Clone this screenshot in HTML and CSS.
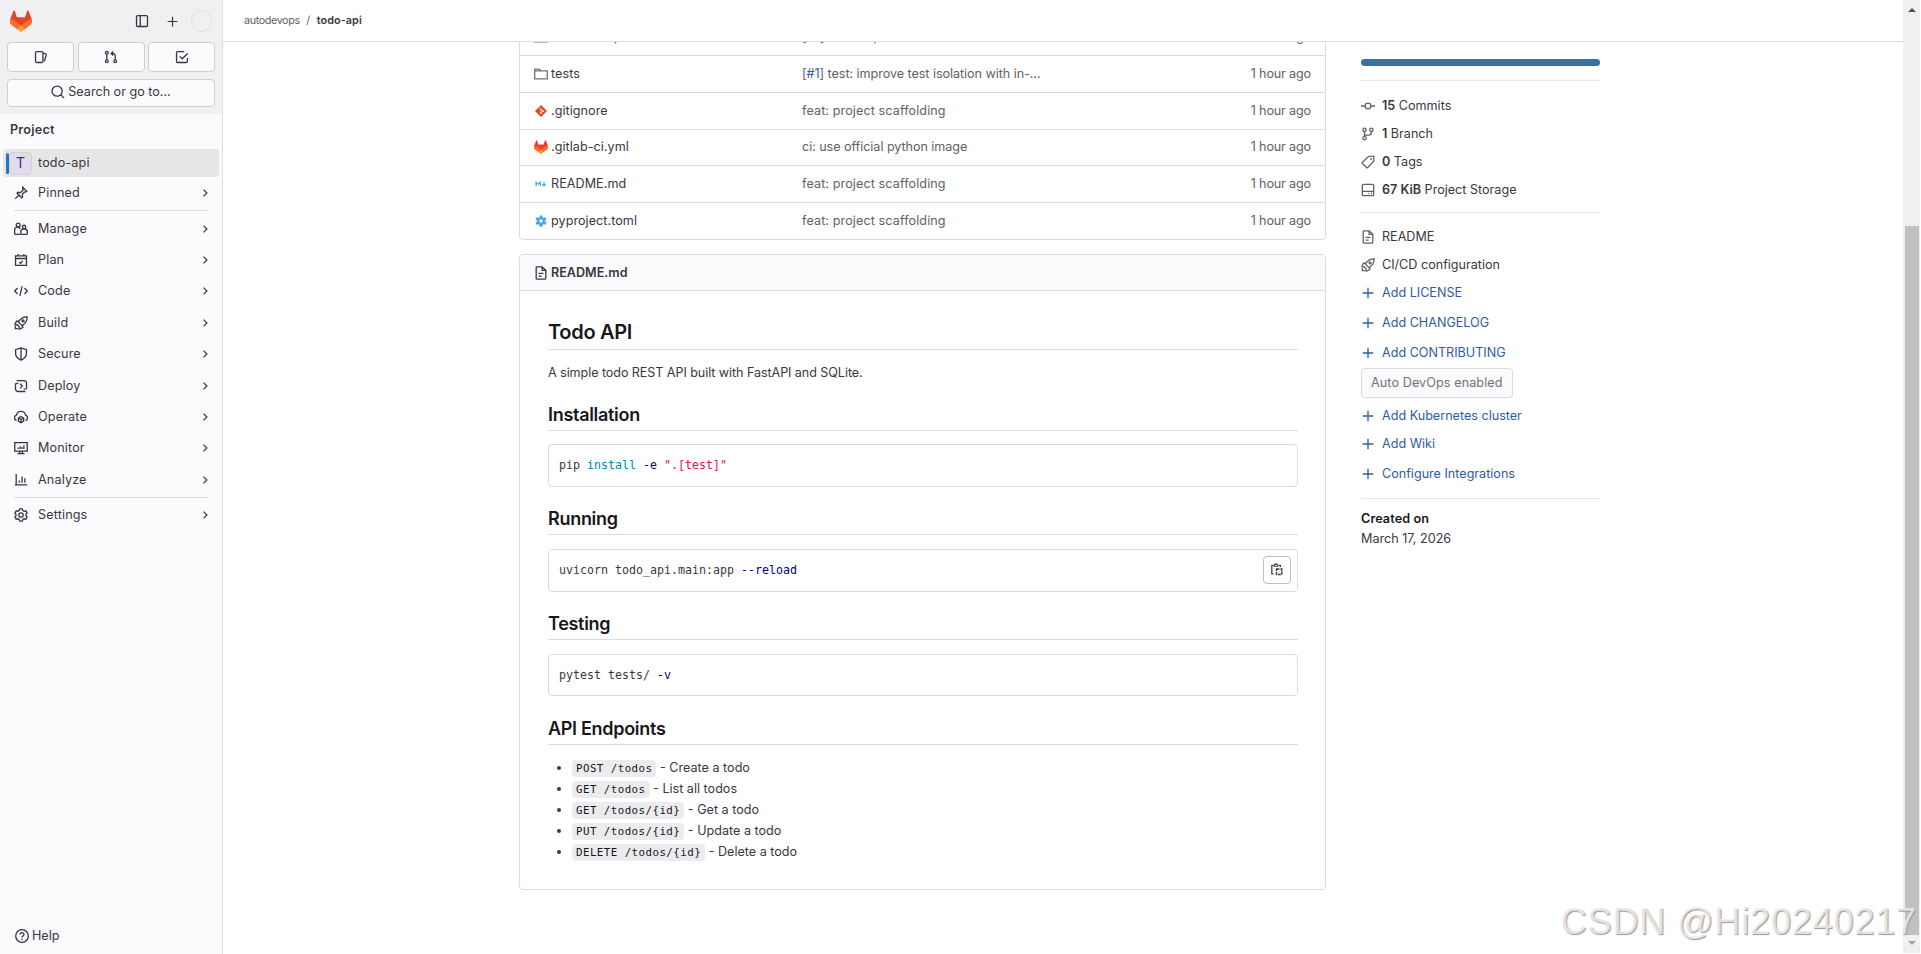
FILE: index.html
```html
<!DOCTYPE html>
<html lang="en">
<head>
    <meta charset="UTF-8" />
    <meta name="viewport" content="width=device-width, initial-scale=1.0"/>
    <title>autodevops / todo-api</title>
    <link rel="stylesheet" href="styles.css">
</head>
<body>
    <svg class="sprite" xmlns="http://www.w3.org/2000/svg">
        <symbol id="tanuki" viewBox="0 0 25 24">
            <path fill="#e24329" d="m24.507 9.5-.034-.09L21.082.562a.896.896 0 0 0-1.694.091l-2.29 7.01H7.825L5.535.653a.898.898 0 0 0-1.694-.09L.451 9.411.416 9.5a6.297 6.297 0 0 0 2.09 7.278l.012.01.03.022 5.16 3.867 2.56 1.935 1.554 1.176a1.051 1.051 0 0 0 1.268 0l1.555-1.176 2.56-1.935 5.197-3.89.014-.01A6.297 6.297 0 0 0 24.507 9.5Z"/>
            <path fill="#fc6d26" d="m24.507 9.5-.034-.09a11.44 11.44 0 0 0-4.56 2.051l-7.447 5.632 4.742 3.584 5.197-3.89.014-.01A6.297 6.297 0 0 0 24.507 9.5Z"/>
            <path fill="#fca326" d="m7.707 20.677 2.56 1.935 1.555 1.176a1.051 1.051 0 0 0 1.268 0l1.555-1.176 2.56-1.935-4.743-3.584-4.755 3.584Z"/>
            <path fill="#fc6d26" d="M5.01 11.461a11.43 11.43 0 0 0-4.56-2.05L.416 9.5a6.297 6.297 0 0 0 2.09 7.278l.012.01.03.022 5.16 3.867 4.745-3.584-7.444-5.632Z"/>
        </symbol>
        <symbol id="panel" viewBox="0 0 16 16"><rect x="1.75" y="1.75" width="12.5" height="12.5" rx="1.2"/><path d="M6 2v12" /></symbol>
        <symbol id="plus" viewBox="0 0 16 16"><path d="M8 2v12M2 8h12"/></symbol>
        <symbol id="issues" viewBox="0 0 16 16"><rect x="1.75" y="1.75" width="8.5" height="12.5" rx="1.5"/><path d="M10.5 3.5l2.9.9a1 1 0 0 1 .7 1.2l-2.3 7.2"/></symbol>
        <symbol id="merge" viewBox="0 0 16 16"><circle cx="3.2" cy="3.2" r="1.6"/><circle cx="3.2" cy="12.8" r="1.6"/><circle cx="12.8" cy="12.8" r="1.6"/><path d="M3.2 5v6M12.8 11V6.5a2.5 2.5 0 0 0-2.5-2.5H8.5M10.5 1.7L8.2 4l2.3 2.3"/></symbol>
        <symbol id="todo" viewBox="0 0 16 16"><path d="M10.5 1.75H3.2c-.8 0-1.45.65-1.45 1.45v9.6c0 .8.65 1.45 1.45 1.45h9.6c.8 0 1.45-.65 1.45-1.45V9M5.5 7.3L8.2 10l6.3-6"/></symbol>
        <symbol id="search" viewBox="0 0 16 16"><circle cx="7" cy="7" r="5.8"/><path d="M11.2 11.2L15 15"/></symbol>
        <symbol id="pin" viewBox="0 0 16 16"><path d="M10 1.5l4.5 4.5-1.5.9-.8-.2-2.7 2.7.3 3.1-1 1-5.3-5.3 1-1 3.1.3 2.7-2.7-.3-1zM6 10l-4.7 4.7"/></symbol>
        <symbol id="users" viewBox="0 0 16 16"><circle cx="4.8" cy="3.4" r="2.2"/><circle cx="11.5" cy="5.6" r="1.9"/><path d="M7 14.2H1.8c-.6 0-1-.4-1-1V9.500a3.200 3.200 0 0 1 6.200-1.500M8.800 14.2h5.400c.6 0 1-.4 1-1V11a3 3 0 0 0-3-3h-1.400a3 3 0 0 0-3 3v2.200c0 .6.4 1 1 1z"/></symbol>
        <symbol id="calendar" viewBox="0 0 16 16"><path d="M1.750 3.200h12.500v11H1.750zM1.750 6.300h12.500M4.700 1v2.500M11.300 1v2.500M6 10.500l1.500 1.300 2.500-2.800"/></symbol>
        <symbol id="code" viewBox="0 0 16 16"><path d="M4 4.500L.8 8 4 11.500M12 4.500L15.200 8 12 11.500M9.300 2.500l-2.600 11"/></symbol>
        <symbol id="rocket" viewBox="0 0 16 16"><path d="M15 1c-4.500-.2-7.500 1.700-10 5.700L9.300 11C13.300 8.500 15.200 5.500 15 1zM5.500 6H2.800L.9 10l3 .3M10 10.500v2.700l-4 1.900-.3-3M3.600 9.800l2.600 2.600M1.500 11.500v3h3"/><circle cx="10.400" cy="5.600" r="1.100"/></symbol>
        <symbol id="shield" viewBox="0 0 16 16"><path d="M8 1L1.800 3v4.500c0 3.500 2.700 5.900 6.200 7.500 3.500-1.600 6.200-4 6.200-7.500V3zM8 1v14"/></symbol>
        <symbol id="deploy" viewBox="0 0 16 16"><path d="M3 1.750h8.300a3 3 0 0 1 3 3v6.500M13 14.250H4.700a3 3 0 0 1-3-3v-6M11 11.500l3.300-.2M5 5l-3.300.2M7 5.500L9.500 8 7 10.500"/></symbol>
        <symbol id="cloud" viewBox="0 0 16 16"><path d="M2.800 12A3.200 3.200 0 0 1 2.800 5.900a5.300 5.300 0 0 1 10.400 0A3.200 3.200 0 0 1 13.200 12"/><path d="M8 7.500l3 1.700v3.600l-3 1.700-3-1.700V9.200zM5 9.300l3 1.600 3-1.600M8 11v3.300"/></symbol>
        <symbol id="monitor" viewBox="0 0 16 16"><path d="M.9 1.900h14.200v9.700H.9zM4 14.400h8M6.500 11.600v2.600M9.500 11.600v2.600M4.800 7.500v1.700M7 6v3.200M9.100 6.800v2.400M11.300 4.800v4.400"/></symbol>
        <symbol id="chart" viewBox="0 0 16 16"><path d="M2.500 1v13.200M1 13.500h14.200M6 8.500V11M9.200 4v7M12.400 6v5"/></symbol>
        <symbol id="gear" viewBox="0 0 16 16"><path d="M6.500 1h3l.6 1.900 1.400.8 2-.5 1.500 2.600L13.700 7.200v1.600l1.300 1.400-1.500 2.600-2-.5-1.400.8L9.500 15h-3l-.6-1.900-1.400-.8-2 .5L1 10.200l1.300-1.400V7.200L1 5.800l1.500-2.600 2 .5 1.400-.8z"/><circle cx="8" cy="8" r="2.500"/></symbol>
        <symbol id="help" viewBox="0 0 16 16"><circle cx="8" cy="8" r="7.200"/><path d="M5.800 6.300a2.200 2.200 0 1 1 3.300 1.900C8.400 8.600 8 9 8 9.700M8 11v1.500"/></symbol>
        <symbol id="chevron" viewBox="0 0 16 16"><path d="M6 3.500L10.500 8 6 12.500"/></symbol>
        <symbol id="folder" viewBox="0 0 16 16"><path d="M.8 13.500v-11h5.400l1.500 2h7.500v9zM.8 4.500h7"/></symbol>
        <symbol id="git" viewBox="0 0 16 16"><path fill="#e64a19" stroke="none" d="M8 0l8 8-8 8-8-8z"/><path stroke="#fff" stroke-width="1.200" d="M5.500 3l2.500 2.500v5M8 5.500l2.500 2.500"/><circle fill="#fff" stroke="none" cx="8" cy="10.800" r="1.200"/><circle fill="#fff" stroke="none" cx="10.800" cy="8.200" r="1.200"/></symbol>
        <symbol id="markdown" viewBox="0 0 16 16"><path stroke="#42a5f5" stroke-width="1.600" d="M1.500 11V5.600L4.300 8.600 7.100 5.600V11M12 5v5M9.700 8.200l2.300 2.300 2.300-2.300"/></symbol>
        <symbol id="toml" viewBox="0 0 16 16"><circle cx="8" cy="8" r="3.900" stroke="#42a5f5" stroke-width="3.200"/><path stroke="#42a5f5" stroke-width="3.600" d="M8 .5v3M8 12.500v3M1.500 4.300l2.600 1.500M11.900 10.200l2.600 1.500M1.500 11.700l2.600-1.500M11.900 5.800l2.600-1.500"/></symbol>
        <symbol id="doc" viewBox="0 0 16 16"><path d="M9.300.9H3.500a1 1 0 0 0-1 1v12.200a1 1 0 0 0 1 1h9a1 1 0 0 0 1-1V5zM9.300.9V5h4.200M5.200 8.500h5.600M5.200 11.500h3.600"/></symbol>
        <symbol id="copy" viewBox="0 0 16 16"><path d="M4.500 2.750H2.250v10.500h2M11 2.750h1.750V5"/><path d="M5.300 4V2.500L7.500.9l2.200 1.600V4z"/><path stroke-width="1.800" stroke-dasharray="3.600 1.200" d="M8 7.500h6.500v6.700H8z"/></symbol>
        <symbol id="commit" viewBox="0 0 16 16"><circle cx="8" cy="8" r="3.200"/><path d="M0 8h4.800M11.200 8H16"/></symbol>
        <symbol id="branch" viewBox="0 0 16 16"><circle cx="4" cy="3.200" r="1.900"/><circle cx="4" cy="12.800" r="1.900"/><circle cx="11.800" cy="3.200" r="1.900"/><path d="M4 5.200v5.600M4 9.200h4.800a3 3 0 0 0 3-3v-1"/></symbol>
        <symbol id="tag" viewBox="0 0 16 16"><path d="M8.800 1.500l5.100-.3a.8.800 0 0 1 .9.900l-.3 5.100-6.800 7a1 1 0 0 1-1.400 0L1.700 9.700a1 1 0 0 1 0-1.400z"/><circle cx="11.500" cy="4.500" r=".4"/></symbol>
        <symbol id="disk" viewBox="0 0 16 16"><rect x="1.500" y="1.500" width="13" height="13" rx="1.500"/><path d="M1.500 9.500h13M8.500 12h1M11.500 12h1"/></symbol>
    </svg>

    <aside class="sidebar">
        <div class="sidebar-top">
            <div class="brand-row">
                <svg class="logo"><use href="#tanuki"/></svg>
                <svg class="icon"><use href="#panel"/></svg>
                <svg class="icon plus"><use href="#plus"/></svg>
                <span class="avatar"></span>
            </div>
            <div class="shortcut-row">
                <a href="#"><svg class="icon"><use href="#issues"/></svg></a>
                <a href="#"><svg class="icon"><use href="#merge"/></svg></a>
                <a href="#"><svg class="icon"><use href="#todo"/></svg></a>
            </div>
            <button class="search"><svg class="icon"><use href="#search"/></svg>Search or go to…</button>
        </div>
        <div class="context-title">Project</div>
        <nav>
            <a class="nav-item active" href="#"><span class="project-avatar">T</span>todo-api</a>
            <a class="nav-item pinned" href="#"><svg class="icon"><use href="#pin"/></svg>Pinned<svg class="chevron"><use href="#chevron"/></svg></a>
            <hr>
            <a class="nav-item" href="#"><svg class="icon"><use href="#users"/></svg>Manage<svg class="chevron"><use href="#chevron"/></svg></a>
            <a class="nav-item" href="#"><svg class="icon"><use href="#calendar"/></svg>Plan<svg class="chevron"><use href="#chevron"/></svg></a>
            <a class="nav-item" href="#"><svg class="icon"><use href="#code"/></svg>Code<svg class="chevron"><use href="#chevron"/></svg></a>
            <a class="nav-item" href="#"><svg class="icon"><use href="#rocket"/></svg>Build<svg class="chevron"><use href="#chevron"/></svg></a>
            <a class="nav-item" href="#"><svg class="icon"><use href="#shield"/></svg>Secure<svg class="chevron"><use href="#chevron"/></svg></a>
            <a class="nav-item" href="#"><svg class="icon"><use href="#deploy"/></svg>Deploy<svg class="chevron"><use href="#chevron"/></svg></a>
            <a class="nav-item" href="#"><svg class="icon"><use href="#cloud"/></svg>Operate<svg class="chevron"><use href="#chevron"/></svg></a>
            <a class="nav-item" href="#"><svg class="icon"><use href="#monitor"/></svg>Monitor<svg class="chevron"><use href="#chevron"/></svg></a>
            <a class="nav-item" href="#"><svg class="icon"><use href="#chart"/></svg>Analyze<svg class="chevron"><use href="#chevron"/></svg></a>
            <hr>
            <a class="nav-item" href="#"><svg class="icon"><use href="#gear"/></svg>Settings<svg class="chevron"><use href="#chevron"/></svg></a>
        </nav>
        <a class="help" href="#"><svg class="icon"><use href="#help"/></svg>Help</a>
    </aside>

    <div class="page">
        <header class="topbar">
            <a href="#">autodevops</a><span class="slash">/</span><strong>todo-api</strong>
        </header>
        <div class="viewport">
            <main>
                <div class="file-table">
                    <div class="file-row">
                        <span class="file"><svg class="icon folder"><use href="#folder"/></svg>src/todo_api</span>
                        <span class="commit">[<a href="#">#1</a>] feat: implement</span>
                        <span class="ago">1 hour ago</span>
                    </div>
                    <div class="file-row">
                        <span class="file"><svg class="icon folder"><use href="#folder"/></svg>tests</span>
                        <span class="commit tight">[<a href="#">#1</a>] test: improve test isolation with in-…</span>
                        <span class="ago">1 hour ago</span>
                    </div>
                    <div class="file-row">
                        <span class="file"><svg class="icon small"><use href="#git"/></svg>.gitignore</span>
                        <span class="commit">feat: project scaffolding</span>
                        <span class="ago">1 hour ago</span>
                    </div>
                    <div class="file-row">
                        <span class="file"><svg class="icon"><use href="#tanuki"/></svg>.gitlab-ci.yml</span>
                        <span class="commit tight">ci: use official python image</span>
                        <span class="ago">1 hour ago</span>
                    </div>
                    <div class="file-row">
                        <span class="file"><svg class="icon small"><use href="#markdown"/></svg>README.md</span>
                        <span class="commit">feat: project scaffolding</span>
                        <span class="ago">1 hour ago</span>
                    </div>
                    <div class="file-row">
                        <span class="file"><svg class="icon small"><use href="#toml"/></svg>pyproject.toml</span>
                        <span class="commit">feat: project scaffolding</span>
                        <span class="ago">1 hour ago</span>
                    </div>
                </div>

                <article class="readme">
                    <div class="readme-title"><svg class="icon"><use href="#doc"/></svg>README.md</div>
                    <div class="markdown">
                        <h1>Todo API</h1>
                        <p>A simple todo REST API built with FastAPI and SQLite.</p>
                        <h2>Installation</h2>
                        <pre>pip <span class="nb">install</span> <span class="nt">-e</span> <span class="s2">".[test]"</span></pre>
                        <h2>Running</h2>
                        <pre>uvicorn todo_api.main:app <span class="nt">--reload</span><button class="copy"><svg class="icon"><use href="#copy"/></svg></button></pre>
                        <h2>Testing</h2>
                        <pre>pytest tests/ <span class="nt">-v</span></pre>
                        <h2>API Endpoints</h2>
                        <ul>
                            <li><code>POST /todos</code> - Create a todo</li>
                            <li><code>GET /todos</code> - List all todos</li>
                            <li><code>GET /todos/{id}</code> - Get a todo</li>
                            <li><code>PUT /todos/{id}</code> - Update a todo</li>
                            <li><code>DELETE /todos/{id}</code> - Delete a todo</li>
                        </ul>
                    </div>
                </article>
            </main>

            <aside class="info">
                <div class="language-bar"></div>
                <div class="info-group stats">
                    <a href="#"><svg class="icon"><use href="#commit"/></svg><span><b>15</b> Commits</span></a>
                    <a href="#"><svg class="icon"><use href="#branch"/></svg><span><b>1</b> Branch</span></a>
                    <a href="#"><svg class="icon"><use href="#tag"/></svg><span><b>0</b> Tags</span></a>
                    <a href="#"><svg class="icon"><use href="#disk"/></svg><span><b>67 KiB</b> Project Storage</span></a>
                </div>
                <div class="info-group links">
                    <a href="#"><svg class="icon"><use href="#doc"/></svg>README</a>
                    <a href="#"><svg class="icon"><use href="#rocket"/></svg>CI/CD configuration</a>
                    <a class="add" href="#"><svg class="icon"><use href="#plus"/></svg>Add LICENSE</a>
                    <a class="add spaced" href="#"><svg class="icon"><use href="#plus"/></svg>Add CHANGELOG</a>
                    <a class="add" href="#"><svg class="icon"><use href="#plus"/></svg>Add CONTRIBUTING</a>
                    <button class="devops">Auto DevOps enabled</button>
                    <a class="add" href="#"><svg class="icon"><use href="#plus"/></svg>Add Kubernetes cluster</a>
                    <a class="add" href="#"><svg class="icon"><use href="#plus"/></svg>Add Wiki</a>
                    <a class="add spaced" href="#"><svg class="icon"><use href="#plus"/></svg>Configure Integrations</a>
                </div>
                <div class="info-group created">
                    <b>Created on</b>
                    <span>March 17, 2026</span>
                </div>
            </aside>
        </div>
    </div>

    <div class="scrollbar">
        <span class="arrow up"></span>
        <span class="thumb"></span>
        <span class="arrow down"></span>
    </div>
    <div class="watermark">CSDN @Hi20240217</div>
</body>
</html>
```
FILE: styles.css
```css
* {
    box-sizing: border-box;
}

body {
    margin: 0;
    height: 100vh;
    display: flex;
    overflow: hidden;
    position: relative;
    background-color: #fff;
    color: #3a383f;
    font-family: Inter, "Liberation Sans", sans-serif;
    font-size: 12.6px;
    line-height: 18px;
}

a {
    color: inherit;
    text-decoration: none;
}

button {
    font: inherit;
    color: inherit;
    letter-spacing: inherit;
    padding: 0;
}

.sprite {
    position: absolute;
    width: 0;
    height: 0;
}

.icon,
.chevron {
    width: 14px;
    height: 14px;
    flex: none;
    fill: none;
    stroke: currentColor;
    stroke-width: 1.5;
}

.logo,
.icon use[href="#tanuki"] {
    stroke: none;
}

/* Sidebar */
.sidebar {
    width: 223px;
    flex: none;
    display: flex;
    flex-direction: column;
    background-color: #fbfafd;
    border-right: 1px solid #dfdee3;
    letter-spacing: 0.15px;
}

.sidebar-top {
    height: 114px;
    padding: 10px 7px 0;
    background-color: #f0f0f2;
}

.brand-row {
    display: flex;
    align-items: center;
    height: 22px;
    padding: 0 3px;
}

.logo {
    width: 22px;
    height: 22px;
    margin-right: auto;
}

.brand-row .icon {
    margin-right: 17px;
}

.brand-row .icon.plus {
    margin-right: 12px;
    width: 13px;
    height: 13px;
}

.avatar {
    width: 21px;
    height: 22px;
    border: 1px solid #e3e3e6;
    border-radius: 50%;
}

.shortcut-row {
    display: grid;
    grid-template-columns: 67px 67px 67px;
    justify-content: space-between;
    margin-top: 10px;
}

.shortcut-row a,
.search {
    display: flex;
    align-items: center;
    justify-content: center;
    height: 30px;
    background-color: #fbfafd;
    border: 1px solid #cfced3;
    border-radius: 4px;
}

.search {
    width: 100%;
    height: 28px;
    margin-top: 7px;
    gap: 3px;
    padding-bottom: 2px;
    letter-spacing: 0;
}

.context-title {
    padding: 7px 10px 0;
    height: 35px;
    font-weight: 600;
    letter-spacing: 0.25px;
}

.nav-item {
    display: flex;
    align-items: center;
    height: 31.4px;
    padding: 0 11px 0 14px;
}

.nav-item .icon {
    margin-right: 10px;
}

.nav-item.active {
    height: 28px;
    margin: 0 3px;
    padding: 0 3px;
    background-color: #e6e6e8;
    border-radius: 3px;
}

.nav-item.active::before {
    content: "";
    width: 3px;
    height: 21px;
    border-radius: 2px;
    background-color: #1f75cb;
}

.nav-item.pinned {
    height: 32px;
}

.project-avatar {
    width: 23px;
    height: 23px;
    margin-right: 6px;
    border: 1px solid #d3d0da;
    border-radius: 4px;
    background-color: #e1dcec;
    color: #41309b;
    font-size: 14.4px;
    line-height: 20px;
    text-align: center;
    letter-spacing: 0;
}

.chevron {
    width: 12px;
    height: 12px;
    margin-left: auto;
    stroke-width: 1.7;
}

nav hr {
    height: 1px;
    margin: 1px 14px 2px;
    border: 0;
    background-color: #dfdee3;
}

.help {
    display: flex;
    align-items: center;
    gap: 3px;
    margin-top: auto;
    padding: 0 0 9px 15px;
    letter-spacing: 0;
}

/* Page */
.page {
    flex: 1;
    min-width: 0;
    display: flex;
    flex-direction: column;
}

.topbar {
    flex: none;
    display: flex;
    align-items: center;
    height: 42px;
    padding: 0 21px;
    border-bottom: 1px solid #dfdfdf;
    font-size: 10.8px;
    letter-spacing: -0.4px;
    color: #626168;
}

.topbar .slash {
    margin: 0 7px 0 6.5px;
}

.topbar strong {
    color: #3a383f;
    font-weight: 600;
    letter-spacing: 0.1px;
}

.viewport {
    flex: 1;
    min-height: 0;
    overflow: hidden;
    display: flex;
    align-items: flex-start;
    padding-left: 296px;
}

main {
    width: 807px;
    flex: none;
    margin: -23.8px 35px 0 0;
}

.file-table,
.readme {
    border: 1px solid #dcdcde;
    border-radius: 4px;
}

.file-row {
    display: grid;
    grid-template-columns: 268px 1fr 100px;
    align-items: center;
    height: 36.8px;
    padding: 0 14px;
    border-bottom: 1px solid #dcdcde;
}

.file-row:last-child {
    height: 36px;
    border-bottom: 0;
}

.file {
    display: flex;
    align-items: center;
    gap: 3px;
    letter-spacing: 0.05px;
}

.file .icon.small {
    width: 12px;
    height: 12px;
    margin: 0 1px;
}

.folder {
    color: #737278;
}

.commit,
.ago {
    color: #626168;
}

.commit {
    letter-spacing: 0.1px;
}

.commit.tight {
    letter-spacing: -0.05px;
}

.commit a {
    color: #2f5ca0;
}

.ago {
    text-align: right;
    letter-spacing: -0.15px;
}

.readme {
    margin-top: 13.8px;
    height: 636px;
}

.readme-title {
    display: flex;
    align-items: center;
    gap: 3px;
    height: 36px;
    padding: 1px 14px 0;
    background-color: #fbfafd;
    border-bottom: 1px solid #dcdcde;
    border-radius: 4px 4px 0 0;
    font-weight: 600;
}

.markdown {
    padding: 28px 27px 0 28px;
}

.markdown h1,
.markdown h2 {
    margin: 0;
    height: 31px;
    border-bottom: 1px solid #dcdcde;
    color: #18171d;
    font-size: 18px;
    font-weight: 600;
    line-height: 30px;
    letter-spacing: -0.3px;
}

.markdown h1 {
    font-size: 20px;
    line-height: 26px;
}

.markdown p {
    margin: 14px 0 17.8px;
    letter-spacing: -0.08px;
}

.markdown pre {
    position: relative;
    height: 42.6px;
    margin: 13.6px 0 17.4px;
    padding: 0 10px;
    border: 1px solid #dcdcde;
    border-radius: 4px;
    font-family: "DejaVu Sans Mono", "Liberation Mono", monospace;
    font-size: 11.63px;
    line-height: 40px;
}

.nb {
    color: #0086b3;
}

.nt {
    color: #000080;
}

.s2 {
    color: #d14;
}

.copy {
    position: absolute;
    top: 6px;
    right: 6px;
    width: 28px;
    height: 28px;
    display: flex;
    align-items: center;
    justify-content: center;
    padding-right: 1px;
    border: 1px solid #bfbfc3;
    border-radius: 4px;
    background-color: #fff;
}

.copy .icon {
    width: 13px;
    height: 13px;
}

.markdown ul {
    margin: 13.8px 0 0;
    padding-left: 24px;
}

.markdown li {
    height: 20.8px;
    line-height: 20.8px;
}

code {
    padding: 2px 4px;
    border-radius: 4px;
    background-color: #ececef;
    color: #18171d;
    font-family: "DejaVu Sans Mono", "Liberation Mono", monospace;
    font-size: 10.8px;
    letter-spacing: 0.45px;
}

/* Project info */
.info {
    width: 239px;
    padding-top: 17px;
}

.language-bar {
    height: 7px;
    margin-bottom: 14px;
    border-radius: 4px;
    background-color: #3572a5;
}

.info-group {
    border-top: 1px solid #e6e6e8;
    padding-top: 11px;
}

.info-group a {
    display: flex;
    align-items: center;
    height: 28px;
    gap: 7px;
}

.info-group .icon {
    color: #626168;
}

.info-group b {
    font-weight: 600;
}

.stats {
    height: 132px;
}

.links {
    height: 286px;
    padding-top: 10px;
}

.info-group .add,
.info-group .add .icon {
    color: #2f5ca0;
}

.info-group .spaced {
    height: 32px;
}

.devops {
    display: block;
    height: 30px;
    margin: 1px 0 4px;
    padding: 0 9px;
    border: 1px solid #dcdcde;
    border-radius: 4px;
    background-color: #fbfafd;
    color: #737278;
    letter-spacing: 0.1px;
}

.created {
    display: flex;
    flex-direction: column;
    gap: 2px;
}

.created b {
    color: #18171d;
    letter-spacing: 0.1px;
}

/* Scrollbar */
.scrollbar {
    flex: none;
    width: 17px;
    margin-right: 1px;
    height: 953px;
    display: flex;
    flex-direction: column;
    align-items: center;
    background-color: #f0f0f0;
}

.thumb {
    width: 14px;
    height: 709px;
    margin-top: 214px;
    background-color: #c1c1c1;
}

.arrow {
    border: 4px solid transparent;
}

.up {
    border-top: 0;
    border-bottom-color: #505050;
    margin-top: 8px;
}

.down {
    border-bottom: 0;
    border-top-color: #a3a3a3;
    margin-top: 6px;
}

.watermark {
    position: absolute;
    right: 4px;
    bottom: 12px;
    font-family: "Liberation Sans", sans-serif;
    font-size: 36px;
    line-height: 40px;
    letter-spacing: 0.85px;
    color: rgba(238, 238, 238, 0.85);
    text-shadow: 1px 1px 1px #999;
}
```
